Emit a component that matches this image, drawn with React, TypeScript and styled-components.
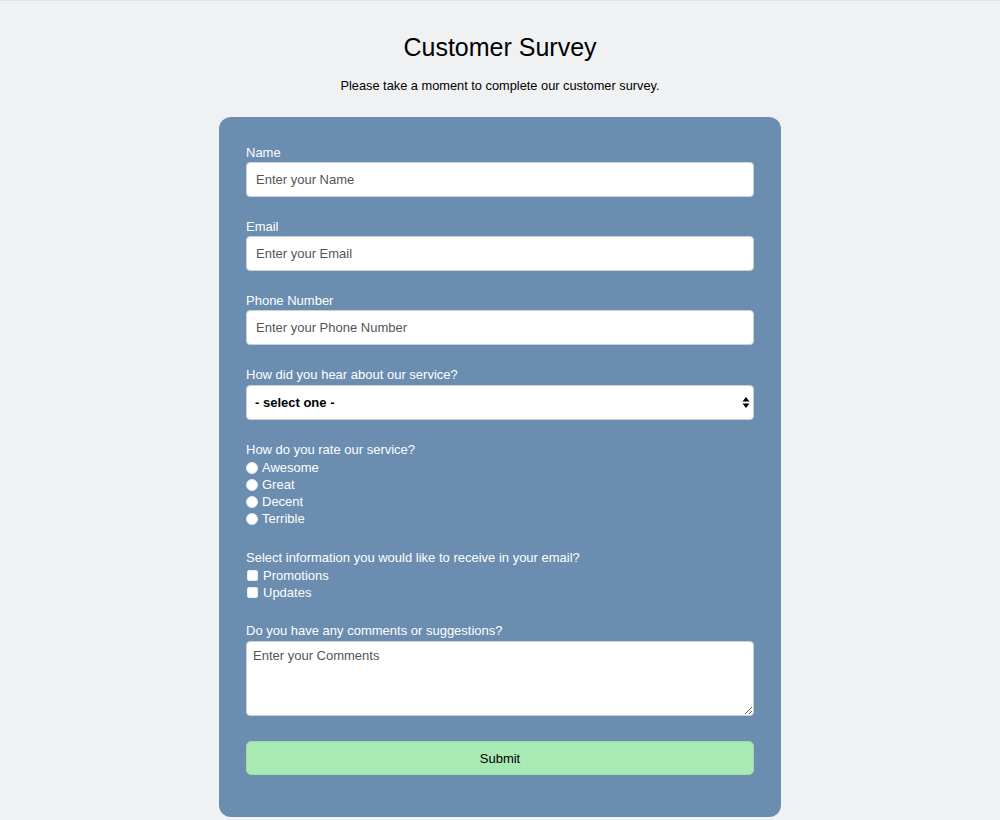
import React from "react";
import styled, { createGlobalStyle } from "styled-components";

const Global = createGlobalStyle`
  html, body { margin: 0; padding: 0; }
  body {
    background: #f0f1f3;
    font-family: "Liberation Sans", Arial, sans-serif;
    color: #000;
    border-top: 1px solid #e2e3e6;
  }
`;

const Page = styled.div`
  display: flex;
  flex-direction: column;
  align-items: center;
  min-height: 819px;
`;

const Title = styled.h1`
  margin: 30px 0 0;
  font-size: 25px;
  font-weight: 400;
  line-height: 32px;
`;

const Subtitle = styled.p`
  margin: 14px 0 0;
  font-size: 12.8px;
  line-height: 17px;
`;

const Card = styled.form`
  margin-top: 23px;
  width: 562px;
  box-sizing: border-box;
  background: #6a8db0;
  border-radius: 12px;
  padding: 28px 27px 42px;
  display: flex;
  flex-direction: column;
`;

const Group = styled.div<{ $gap?: number }>`
  display: flex;
  flex-direction: column;
  margin-bottom: ${(p) => p.$gap ?? 22}px;
`;

const Label = styled.label`
  color: #fff;
  font-size: 13px;
  line-height: 15px;
  margin-bottom: 2px;
`;

const Input = styled.input`
  box-sizing: border-box;
  height: 35px;
  width: 100%;
  border: 1px solid #c9d1d9;
  border-radius: 4px;
  padding: 0 9px;
  font-family: inherit;
  font-size: 13px;
  color: #333;
  background: #fff;
  outline: none;
  &::placeholder { color: #555; }
`;

const SelectWrap = styled.div`
  position: relative;
  margin-top: 1px;
`;

const Select = styled.select`
  box-sizing: border-box;
  height: 35px;
  width: 100%;
  border: 1px solid #c9d1d9;
  border-radius: 4px;
  padding: 0 8px;
  font-family: inherit;
  font-size: 13px;
  font-weight: 700;
  color: #000;
  background: #fff;
  appearance: none;
  -webkit-appearance: none;
  outline: none;
`;

const Arrows = styled.svg`
  position: absolute;
  right: 4px;
  top: 11px;
  pointer-events: none;
`;

const OptionRow = styled.label`
  display: flex;
  align-items: center;
  gap: 4px;
  color: #fff;
  font-size: 13px;
  line-height: 17px;
  height: 17px;
`;

const Radio = styled.span`
  width: 12px;
  height: 12px;
  border-radius: 50%;
  background: #fff;
  border: 1px solid #e6e9ee;
  box-sizing: border-box;
  flex-shrink: 0;
`;

const Check = styled.span`
  width: 11px;
  height: 11px;
  border-radius: 2px;
  background: #fff;
  border: 1px solid #e6e9ee;
  box-sizing: border-box;
  flex-shrink: 0;
  margin-left: 1px;
  margin-right: 1px;
`;

const TextArea = styled.textarea`
  box-sizing: border-box;
  margin-top: 1px;
  height: 75px;
  width: 100%;
  border: 1px solid #c9d1d9;
  border-radius: 4px;
  padding: 6px 6px;
  font-family: inherit;
  font-size: 13px;
  color: #333;
  resize: vertical;
  outline: none;
  &::placeholder { color: #555; }
`;

const Submit = styled.button`
  margin-top: 3px;
  height: 34px;
  width: 100%;
  border: 1px solid #9fdcab;
  border-radius: 5px;
  background: #a9e9b3;
  font-family: inherit;
  font-size: 13px;
  color: #000;
  cursor: pointer;
`;

export default function App() {
  return (
    <>
      <Global />
      <Page>
        <Title>Customer Survey</Title>
        <Subtitle>Please take a moment to complete our customer survey.</Subtitle>
        <Card onSubmit={(e) => e.preventDefault()}>
          <Group>
            <Label>Name</Label>
            <Input placeholder="Enter your Name" />
          </Group>
          <Group>
            <Label>Email</Label>
            <Input placeholder="Enter your Email" />
          </Group>
          <Group>
            <Label>Phone Number</Label>
            <Input placeholder="Enter your Phone Number" />
          </Group>
          <Group>
            <Label>How did you hear about our service?</Label>
            <SelectWrap>
              <Select defaultValue="">
                <option value="">- select one -</option>
                <option>Friend</option>
                <option>Search engine</option>
                <option>Advertisement</option>
              </Select>
              <Arrows width="8" height="13" viewBox="0 0 8 13">
                <path d="M4 1 L7.5 5.5 H0.5 Z" fill="#000" />
                <path d="M4 12 L7.5 7.5 H0.5 Z" fill="#000" />
              </Arrows>
            </SelectWrap>
          </Group>
          <Group $gap={23}>
            <Label>How do you rate our service?</Label>
            {["Awesome", "Great", "Decent", "Terrible"].map((t) => (
              <OptionRow key={t}>
                <Radio />
                {t}
              </OptionRow>
            ))}
          </Group>
          <Group>
            <Label>Select information you would like to receive in your email?</Label>
            {["Promotions", "Updates"].map((t) => (
              <OptionRow key={t}>
                <Check />
                {t}
              </OptionRow>
            ))}
          </Group>
          <Group>
            <Label>Do you have any comments or suggestions?</Label>
            <TextArea placeholder="Enter your Comments" />
          </Group>
          <Submit type="submit">Submit</Submit>
        </Card>
      </Page>
    </>
  );
}
